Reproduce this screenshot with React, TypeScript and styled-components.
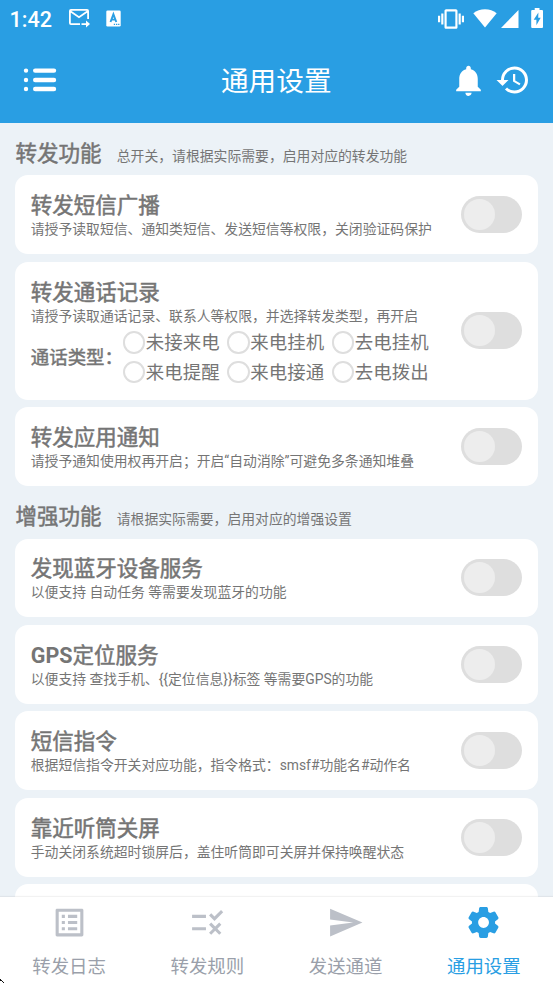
import React from "react";
import styled, { createGlobalStyle } from "styled-components";
import {
  MdHistory,
  MdListAlt,
  MdNotifications,
  MdRule,
  MdSend,
  MdVibration,
} from "react-icons/md";

const Global = createGlobalStyle`
  * { box-sizing: border-box; }
  body {
    margin: 0;
    background: #ecf2f7;
    font-family: Roboto, "Noto Sans CJK SC", sans-serif;
    color: #757575;
  }
`;

const Screen = styled.div`
  position: relative;
  width: 553px;
  height: 983px;
  display: flex;
  flex-direction: column;
  overflow: hidden;
`;

const StatusBar = styled.div`
  flex: none;
  height: 37px;
  padding: 0 10px 0 9.6px;
  display: flex;
  align-items: center;
  background: #299ee3;
  color: #fff;
`;

const Clock = styled.span`
  width: 58.4px;
  font-size: 21.5px;
  font-weight: 500;
  line-height: 37px;
  padding-top: 1px;
`;

const StatusIcons = styled.div<{ $end?: boolean }>`
  display: flex;
  align-items: center;
  height: 37px;
  margin-left: ${(p) => (p.$end ? "auto" : "0")};
  padding-bottom: ${(p) => (p.$end ? "0" : "1px")};
  svg { display: block; }
`;

const TitleBar = styled.header`
  flex: none;
  height: 86px;
  display: grid;
  grid-template-columns: 1fr auto 1fr;
  align-items: center;
  padding: 0 22px 0 23px;
  background: #299ee3;
  color: #fff;
  svg { display: block; }
`;

const PageTitle = styled.h1`
  margin: 0;
  padding: 3px 1.5px 0 0;
  font-size: 27.65px;
  font-weight: 400;
  line-height: 36px;
`;

const Actions = styled.div`
  display: flex;
  justify-content: flex-end;
  gap: 8px;
`;

const Content = styled.main`
  flex: 1;
  min-height: 0;
  overflow: hidden;
  padding: 0 15.4px;
`;

const SectionHead = styled.div`
  height: 52.3px;
  padding-top: 16px;
  display: flex;
  align-items: baseline;
  gap: 15.4px;
`;

const Heading = styled.h2`
  margin: 0;
  font-size: 21.5px;
  font-weight: 400;
  line-height: 29px;
  white-space: nowrap;
  -webkit-text-stroke: 0.5px currentColor;
`;

const Latin = styled.span`
  font-weight: 700;
  -webkit-text-stroke: 0;
`;

const Note = styled.p`
  margin: 0;
  font-size: 13.83px;
  line-height: 19px;
  white-space: nowrap;
`;

const CardList = styled.div`
  display: flex;
  flex-direction: column;
  gap: 7.7px;
`;

const Card = styled.section`
  flex: none;
  display: flex;
  align-items: center;
  justify-content: space-between;
  padding: 15.4px;
  border-radius: 13px;
  background: #fff;
`;

const CardText = styled.div`
  flex: none;
  width: 420px;
  padding-top: 0.5px;
  margin-bottom: -0.5px;
`;

const Switch = styled.button`
  flex: none;
  width: 61.4px;
  height: 37px;
  padding: 3px;
  border: 0;
  border-radius: 19px;
  background: #dedede;
`;

const Knob = styled.span`
  display: block;
  width: 31px;
  height: 31px;
  border-radius: 50%;
  background: #ededed;
`;

const CallTypes = styled.div`
  display: flex;
  align-items: center;
  height: 59.2px;
`;

const CallLabel = styled.span`
  width: 92.1px;
  font-size: 18.43px;
  padding-top: 1px;
  white-space: nowrap;
  -webkit-text-stroke: 0.45px currentColor;
`;

const Options = styled.div`
  display: grid;
  grid-template-columns: repeat(3, 104.5px);
  grid-auto-rows: 29.5px;
  padding-top: 4px;
`;

const Option = styled.label`
  display: flex;
  align-items: center;
  gap: 0.6px;
  font-size: 18.43px;
  line-height: 29px;
  white-space: nowrap;
`;

const Circle = styled.span`
  width: 22.4px;
  height: 22.4px;
  border: 2px solid #dedede;
  border-radius: 50%;
`;

const TabBar = styled.nav`
  flex: none;
  height: 86.5px;
  display: grid;
  grid-template-columns: repeat(4, 1fr);
  background: #fff;
  box-shadow: 0 -1px 1px rgba(0, 0, 0, 0.05);
  z-index: 1;
`;

const Tab = styled.div<{ $active?: boolean }>`
  display: flex;
  flex-direction: column;
  align-items: center;
  padding-top: 7.5px;
  gap: 13px;
  color: ${(p) => (p.$active ? "#299ee3" : "#9a9faa")};
  svg { display: block; color: ${(p) => (p.$active ? "#299ee3" : "#bcc0c8")}; }
`;

const TabLabel = styled.span`
  font-size: 18.43px;
  line-height: 26px;
`;

const Pointer = styled.svg`
  position: absolute;
  left: 0;
  bottom: 0;
  z-index: 2;
`;

type Item = { title: string; latin?: string; note: string; options?: string[] };

const forwarding: Item[] = [
  { title: "转发短信广播", note: "请授予读取短信、通知类短信、发送短信等权限，关闭验证码保护" },
  {
    title: "转发通话记录",
    note: "请授予读取通话记录、联系人等权限，并选择转发类型，再开启",
    options: ["未接来电", "来电挂机", "去电挂机", "来电提醒", "来电接通", "去电拨出"],
  },
  { title: "转发应用通知", note: "请授予通知使用权再开启；开启“自动消除”可避免多条通知堆叠" },
];

const enhanced: Item[] = [
  { title: "发现蓝牙设备服务", note: "以便支持 自动任务 等需要发现蓝牙的功能" },
  { latin: "GPS", title: "定位服务", note: "以便支持 查找手机、{{定位信息}}标签 等需要GPS的功能" },
  { title: "短信指令", note: "根据短信指令开关对应功能，指令格式：smsf#功能名#动作名" },
  { title: "靠近听筒关屏", note: "手动关闭系统超时锁屏后，盖住听筒即可关屏并保持唤醒状态" },
  { title: "", note: "" },
];

function SettingCard({ title, latin, note, options }: Item) {
  return (
    <Card>
      <CardText>
        <Heading>
          {latin && <Latin>{latin}</Latin>}
          {title}
        </Heading>
        <Note>{note}</Note>
        {options && (
          <CallTypes>
            <CallLabel>通话类型：</CallLabel>
            <Options>
              {options.map((o) => (
                <Option key={o}>
                  <Circle />
                  {o}
                </Option>
              ))}
            </Options>
          </CallTypes>
        )}
      </CardText>
      <Switch>
        <Knob />
      </Switch>
    </Card>
  );
}

function Section({ title, note, items }: { title: string; note: string; items: Item[] }) {
  return (
    <>
      <SectionHead>
        <Heading>{title}</Heading>
        <Note>{note}</Note>
      </SectionHead>
      <CardList>
        {items.map((item, i) => (
          <SettingCard key={i} {...item} />
        ))}
      </CardList>
    </>
  );
}

const MailForward = () => (
  <svg width="23" height="20" viewBox="0 0 23 20" fill="none" stroke="#fff" strokeWidth="1.8">
    <path d="M12 16.1H3Q1.9 16.1 1.9 15V3Q1.9 1.9 3 1.9H19Q20.1 1.9 20.1 3V11M2 3L11 9.2L20 3M13.5 16.1H20" />
    <path d="M18 12.6L22 16.1L18 19.6Z" fill="#fff" stroke="none" />
  </svg>
);

const LetterBadge = () => (
  <svg width="15" height="17" viewBox="0 0 15 17">
    <rect x="0.3" y="0.5" width="14.4" height="16" rx="1.3" fill="#fff" />
    <path
      d="M4.5 12L7.4 4.3L10.3 12M5.6 9.6H9.2"
      fill="none"
      stroke="#299ee3"
      strokeWidth="1.9"
    />
    <path d="M7.8 14.3h1.3M10 14.3h1.3M12.1 14.3h1.3" stroke="#299ee3" strokeWidth="1.3" />
  </svg>
);

const MenuList = () => (
  <svg width="34" height="26" viewBox="0 0 34 26" fill="none" stroke="#fff" strokeWidth="4.4" strokeLinecap="round">
    <path d="M12.2 3.6H31M12.2 13H31M12.2 22H31" />
    <path d="M3 3.6h.01M3 13h.01M3 22h.01" />
  </svg>
);

const Wifi = () => (
  <svg width="24" height="20" viewBox="0 0 24 20">
    <path d="M12 18.5L0.3 4.2Q5.3 0.3 12 0.3T23.7 4.2Z" fill="#fff" />
  </svg>
);

const Signal = () => (
  <svg width="18" height="18" viewBox="0 0 18 18">
    <path d="M0 18L17.5 0V18Z" fill="#fff" />
  </svg>
);

const Battery = () => (
  <svg width="12" height="21" viewBox="0 0 12 21">
    <path
      fillRule="evenodd"
      fill="#fff"
      d="M3.7 0h4.8v2H11Q12 2 12 3V19Q12 20 11 20H1.2Q.2 20 .2 19V3Q.2 2 1.2 2H3.7ZM7.4 4.5L2.7 11.8H5.4V17.3L9.7 9.8H7.2Z"
    />
  </svg>
);

const Gear = () => (
  <svg width="37" height="37" viewBox="0 0 24 24" fill="currentColor">
    <path d="M19.5 12c0-.23-.01-.45-.03-.68l1.86-1.41c.4-.3.51-.86.26-1.3l-1.87-3.23a.987.987 0 0 0-1.25-.42l-2.15.91c-.37-.26-.76-.49-1.17-.68l-.29-2.31c-.06-.5-.49-.88-.99-.88h-3.73c-.51 0-.94.38-1 .88l-.29 2.31c-.41.19-.8.42-1.17.68l-2.15-.91c-.46-.2-1-.02-1.25.42L2.41 8.62c-.25.44-.14.99.26 1.3l1.86 1.41a7.343 7.343 0 0 0 0 1.35l-1.86 1.41c-.4.3-.51.86-.26 1.3l1.87 3.23c.25.44.79.62 1.25.42l2.15-.91c.37.26.76.49 1.17.68l.29 2.31c.06.5.49.88.99.88h3.73c.5 0 .93-.38.99-.88l.29-2.31c.41-.19.8-.42 1.17-.68l2.15.91c.46.2 1 .02 1.25-.42l1.87-3.23c.25-.44.14-.99-.26-1.3l-1.86-1.41c.03-.23.04-.45.04-.68zm-7.46 3.5c-1.93 0-3.5-1.57-3.5-3.5s1.57-3.5 3.5-3.5 3.5 1.57 3.5 3.5-1.57 3.5-3.5 3.5z" />
  </svg>
);

export default function App() {
  return (
    <Screen>
      <Global />
      <StatusBar>
        <Clock>1:42</Clock>
        <StatusIcons>
          <MailForward />
          <svg width="15" height="1" />
          <LetterBadge />
        </StatusIcons>
        <StatusIcons $end>
          <MdVibration size={26} color="#fff" />
          <svg width="9.5" height="1" />
          <Wifi />
          <svg width="4" height="1" />
          <Signal />
          <svg width="12" height="1" />
          <Battery />
        </StatusIcons>
      </StatusBar>
      <TitleBar>
        <MenuList />
        <PageTitle>通用设置</PageTitle>
        <Actions>
          <MdNotifications size={37} />
          <MdHistory size={36} />
        </Actions>
      </TitleBar>
      <Content>
        <Section title="转发功能" note="总开关，请根据实际需要，启用对应的转发功能" items={forwarding} />
        <Section title="增强功能" note="请根据实际需要，启用对应的增强设置" items={enhanced} />
      </Content>
      <TabBar>
        <Tab>
          <MdListAlt size={37} />
          <TabLabel>转发日志</TabLabel>
        </Tab>
        <Tab>
          <MdRule size={37} />
          <TabLabel>转发规则</TabLabel>
        </Tab>
        <Tab>
          <MdSend size={37} />
          <TabLabel>发送通道</TabLabel>
        </Tab>
        <Tab $active>
          <Gear />
          <TabLabel>通用设置</TabLabel>
        </Tab>
      </TabBar>
      <Pointer width="4" height="5" viewBox="0 0 4 5">
        <path d="M0 1h1v1h1v1H0zM2 3h1v1H2zM3 4h1v1H3z" fill="#111" />
      </Pointer>
    </Screen>
  );
}
